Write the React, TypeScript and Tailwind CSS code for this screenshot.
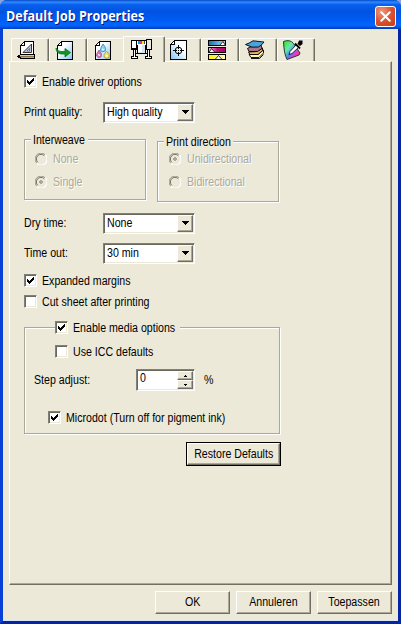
import React from 'react'
import clsx from 'clsx'
import { X } from 'lucide-react'

interface TextProps {
  children: React.ReactNode
  disabled?: boolean
  center?: boolean
  className?: string
}

/** Dialog text: narrow 8pt sans, etched when the control is disabled. */
function Text({ children, disabled, center, className }: TextProps): React.ReactElement {
  return (
    <span
      className={clsx(
        'inline-block whitespace-nowrap text-[12px] leading-[14px] scale-x-[0.885]',
        center ? 'origin-center' : 'origin-left',
        disabled ? 'text-[#aca899] [text-shadow:1px_1px_0_#fff]' : 'text-black',
        className,
      )}
    >
      {children}
    </span>
  )
}

const SUNKEN =
  'border border-t-[#808078] border-l-[#808078] border-b-white border-r-white shadow-[inset_1px_1px_0_#6a6960,inset_-1px_-1px_0_#ece9d8]'
const RAISED =
  'border border-t-white border-l-white border-b-[#716f64] border-r-[#716f64] shadow-[inset_-1px_-1px_0_#aca899]'
const ETCHED = 'border border-[#aca899] shadow-[1px_1px_0_#fff,inset_1px_1px_0_#fff]'

interface CheckProps {
  label: string
  checked?: boolean
  className?: string
}

function Check({ label, checked, className }: CheckProps): React.ReactElement {
  return (
    <div className={clsx('flex h-[13px] items-center gap-[5px]', className)}>
      <span className={clsx('h-[13px] w-[13px] shrink-0 bg-white', SUNKEN)}>
        {checked && (
          <svg width="11" height="11" viewBox="0 0 11 11" shapeRendering="crispEdges">
            <path d="M2 4h1v1h1v1h1v-1h1v-1h1v-1h1v-1h1v3h-1v1h-1v1h-1v1h-1v1h-1v-1h-1v-1h-1z" />
          </svg>
        )}
      </span>
      <Text>{label}</Text>
    </div>
  )
}

function Radio({ label, checked }: { label: string; checked?: boolean }): React.ReactElement {
  return (
    <div className="flex h-[13px] items-center gap-[6px]">
      <svg width="12" height="12" viewBox="0 0 12 12" fill="none" className="shrink-0">
        <path d="M1.8 10.2A5.4 5.4 0 0 1 10.2 1.8" stroke="#9b988a" />
        <path d="M2.7 9.3A4.5 4.5 0 0 1 9.3 2.7" stroke="#716f64" />
        <path d="M10.3 1.8A5.5 5.5 0 0 1 1.8 10.3" stroke="#fff" strokeWidth="1.2" />
        {checked && <path d="M5 4h2v1h1v2h-1v1h-2v-1h-1v-2h1z" fill="#aca899" />}
      </svg>
      <Text disabled>{label}</Text>
    </div>
  )
}

function Select({ label, value }: { label: string; value: string }): React.ReactElement {
  return (
    <div className="flex h-5 items-center">
      <Text className="w-[79px]">{label}</Text>
      <div className={clsx('flex h-[21px] w-[92px] items-center bg-white p-px pl-[3px]', SUNKEN)}>
        <Text className="flex-1">{value}</Text>
        <span className={clsx('flex h-[17px] w-[16px] items-center justify-center bg-[#ece9d8]', RAISED)}>
          <svg width="7" height="4" viewBox="0 0 7 4" shapeRendering="crispEdges">
            <path d="M0 0h7v1h-1v1h-1v1h-1v1h-1v-1h-1v-1h-1v-1h-1z" />
          </svg>
        </span>
      </div>
    </div>
  )
}

interface GroupProps {
  title: string
  titleWidth: string
  className?: string
  children: React.ReactNode
}

function Group({ title, titleWidth, className, children }: GroupProps): React.ReactElement {
  return (
    <div className={clsx('w-[122px]', ETCHED, className)}>
      <div className={clsx('-mt-[7px] ml-[6px] h-[14px] bg-[#ece9d8] pl-[2px]', titleWidth)}>
        <Text className="align-top">{title}</Text>
      </div>
      {children}
    </div>
  )
}

function Button({ label, focused }: { label: string; focused?: boolean }): React.ReactElement {
  return (
    <button
      type="button"
      className={clsx('flex', focused ? 'h-[24px] w-[95px] border border-black' : 'h-[23px] w-[75px]')}
    >
      <span className={clsx('flex h-full w-full items-center justify-center bg-[#ece9d8] pb-px', RAISED)}>
        <Text center>{label}</Text>
      </span>
    </button>
  )
}

/** White sheet with a folded corner, shared by the document tabs. */
function Sheet({ fill = '#fff' }: { fill?: string }): React.ReactElement {
  return (
    <>
      <path d="M7.5 1.5H18.500V19.500H3.500V5.500Z" fill={fill} stroke="#000" />
      <path d="M3.500 5.500H7.500V1.500" fill="#fff" stroke="#000" />
    </>
  )
}

function Icon({ children }: { children: React.ReactNode }): React.ReactElement {
  return (
    <svg width="22" height="21" viewBox="0 0 22 21" fill="none" shapeRendering="crispEdges" className="shrink-0">
      <defs>
        <linearGradient id="sky" x1="0" y1="0" x2="1" y2="1">
          <stop offset=".35" stopColor="#fff" />
          <stop offset="1" stopColor="#7fc0f5" />
        </linearGradient>
        <linearGradient id="skyLeft" x1="1" y1="0" x2="0" y2="1">
          <stop offset=".35" stopColor="#fff" />
          <stop offset="1" stopColor="#7fc0f5" />
        </linearGradient>
        <linearGradient id="cyan">
          <stop offset="0" stopColor="#1270ab" />
          <stop offset="1" stopColor="#a8dcf4" />
        </linearGradient>
        <linearGradient id="magenta">
          <stop offset="0" stopColor="#f3c3dc" />
          <stop offset=".5" stopColor="#c31579" />
          <stop offset="1" stopColor="#a50061" />
        </linearGradient>
        <linearGradient id="yellow">
          <stop offset="0" stopColor="#fff200" />
          <stop offset="1" stopColor="#fffbb0" />
        </linearGradient>
        <linearGradient id="gamut" x1="0" y1="0" x2="1" y2="1">
          <stop offset="0" stopColor="#38e020" />
          <stop offset=".35" stopColor="#65e8b0" />
          <stop offset=".55" stopColor="#4884f5" />
          <stop offset=".72" stopColor="#ec36cd" />
          <stop offset="1" stopColor="#ff3434" />
        </linearGradient>
      </defs>
      {children}
    </svg>
  )
}

const TAB_ICONS: React.ReactElement[] = [
  <Icon>
    <path d="M8.500 1.500H17.500V14.500H4.500V5.500Z" fill="#fff" stroke="#000" />
    <path d="M4.500 5.500H8.500V1.500" stroke="#000" />
    <path d="M7 12.500L15.500 4V12.500Z" fill="#bac2d5" stroke="#222" strokeWidth=".9" shapeRendering="auto" />
    <path d="M11 11L13.500 8.500V11Z" fill="#fff" stroke="#555" strokeWidth=".7" shapeRendering="auto" />
    <path d="M4 14h15v5H4v-1H2v-1H1v-1h1v-1h2z" fill="#000" />
    <path d="M4 15h14v1H4z" fill="#e0cb9c" />
    <path d="M4 16h14v1H4z" fill="#8c7347" />
    <path d="M5 17h13v1H5z" fill="#c4ab78" />
  </Icon>,
  <Icon>
    <Sheet fill="url(#sky)" />
    <path
      d="M2 8Q4 11.500 7 11.500H11V8.500L16.500 12.500L11 17V14H7Q2 13 2 8Z"
      fill="#159322"
      stroke="#08751a"
      strokeWidth=".8"
      shapeRendering="auto"
    />
  </Icon>,
  <Icon>
    <Sheet fill="url(#sky)" />
    <g shapeRendering="auto" strokeWidth=".8">
      <path d="M11 4Q15 9 13 11Q10 13 8.500 10.500Q8 8 11 4Z" fill="#8bd4ec" stroke="#3184ad" />
      <path d="M7 10Q11 14 9 17Q6 19 4.500 16Q4 14 7 10Z" fill="#dd74b0" stroke="#8b5b9d" />
      <path d="M14.500 11Q18.500 15 17 17.500Q14 19.500 12 17Q11 15 14.500 11Z" fill="#f1e456" stroke="#a79c50" />
      <path d="M10 9l2 1M6 14.500l2 1M14 15l1.500 1.500" stroke="#fff" strokeWidth="1.300" />
    </g>
  </Icon>,
  <Icon>
    <path d="M0 1h15V0h6v11h-6v-1H6v1H0z" fill="#000" />
    <path d="M1 2h4v7H1zM6 2h9v7H6z" fill="#fff" />
    <path d="M16 1h4v9h-4z" fill="#ece9e0" />
    <path d="M7 2h2v3H7z" fill="#00a2df" />
    <path d="M9 2h2v3H9z" fill="#e22aa0" />
    <path d="M11 2h2v3h-2z" fill="#ffe900" />
    <path d="M13 2h1v3h-1z" fill="#444" />
    <path d="M6 6h9v9H6z" fill="#000" />
    <path d="M7 6h7v8H7z" fill="#d2e5f4" />
    <path d="M7 6h4v7H7z" fill="#fff" />
    <path d="M2 11h1v7H2zM4 11h1v7H4zM16 11h1v7h-1zM18 11h1v7h-1zM4 14h13v1H4zM0 17h7v3H0zM14 17h7v3h-7z" fill="#000" />
    <path d="M3 11h1v7H3zM17 11h1v7h-1zM1 18h5v1H1zM15 18h5v1h-5z" fill="#fff" />
  </Icon>,
  <Icon>
    <path d="M6.500 .5H18.500V19.500H2.500V4.500Z" fill="url(#skyLeft)" stroke="#000" />
    <path d="M2.500 4.500H6.500V.5" fill="#fff" stroke="#000" />
    <circle cx="10.500" cy="10.500" r="3.300" stroke="#000" shapeRendering="auto" />
    <path d="M10 5h1v4h-1zM10 12h1v4h-1zM5 10h4v1H5zM12 10h4v1h-4zM10 10h1v1h-1z" fill="#000" />
  </Icon>,
  <Icon>
    <path d="M2.500 .5H19.500V5.500H2.500Z" fill="url(#cyan)" stroke="#000" />
    <path d="M2.500 7.500H19.500V12.500H2.500Z" fill="url(#magenta)" stroke="#000" />
    <path d="M2.500 14.500H19.500V19.500H2.500Z" fill="url(#yellow)" stroke="#000" />
    <g fill="#fff" stroke="#000" strokeWidth=".8" shapeRendering="auto">
      <path d="M13.500 5.500L17 1.500L19.500 5.500Z" />
      <path d="M3 12.500L5.500 8.500L9 12.500Z" />
      <path d="M9 19.500L12.500 15.500L16 19.500Z" />
    </g>
  </Icon>,
  <Icon>
    <g shapeRendering="auto" stroke="#000" strokeWidth=".9" strokeLinejoin="round">
      <path d="M5 14.500L7 17.500H15L19.500 13V10L14 14.500Z" fill="#fff3b0" />
      <path d="M4.500 12L6 14.500H14L18.500 10.500V8L13 11.500Z" fill="#f2b45e" />
      <path d="M3.500 8.500L5 11.500H13.500L18 8.500L17 5L6 7Z" fill="#a8788e" />
      <path d="M1.500 4.500Q5 3.500 9 .8L20 2Q18 5 14.500 7Q8 8.500 1.500 4.500Z" fill="#49a4dc" />
      <path d="M7 18.500H15.500L19.500 14.500" />
    </g>
  </Icon>,
  <Icon>
    <g shapeRendering="auto">
      <path d="M1.500 1.500Q8 -1 11.500 3.500L18 13Q17.500 14.500 17 15L5 19.500Q2 14 1.500 1.500Z" fill="url(#gamut)" stroke="#263b2a" />
      <path d="M7 14.500L8 11.500L14.500 4.500L17 7L10 13.500Z" fill="#fff" stroke="#000" strokeWidth=".8" />
      <path d="M13 3.500L18 8.500" stroke="#000" strokeWidth="1.800" />
      <path d="M15.500 4L17 .5H20.500V4L18 6Z" fill="#000" />
    </g>
  </Icon>,
]

const ACTIVE_TAB = 3

function Tabs(): React.ReactElement {
  return (
    <div className="-ml-[6px] flex h-[25px] items-end pl-[8px]">
      {TAB_ICONS.map((icon, i) => (
        <div
          key={i}
          className={clsx(
            'flex rounded-t-[2px] border border-b-0 border-t-white border-l-white border-r-[#716f64] bg-[#ece9d8] shadow-[inset_-1px_0_0_#aca899]',
            i === ACTIVE_TAB
              ? 'z-10 -mx-[2px] -mb-px h-[26px] w-[42px] pt-[2px] pl-[7px]'
              : 'h-[23px] w-[38px] pt-[1px] pl-[4px]',
          )}
        >
          {icon}
        </div>
      ))}
    </div>
  )
}

function Spinner(): React.ReactElement {
  return (
    <div className={clsx('flex h-[22px] w-[59px] bg-white p-px pl-[3px]', SUNKEN)}>
      <Text className="flex-1">0</Text>
      <div className="flex w-[16px] flex-col">
        <span className={clsx('flex h-[9px] items-center justify-center bg-[#ece9d8]', RAISED)}>
          <svg width="3" height="2" viewBox="0 0 3 2" shapeRendering="crispEdges">
            <path d="M1 0h1v1h1v1H0V1h1z" />
          </svg>
        </span>
        <span className={clsx('flex h-[9px] items-center justify-center bg-[#ece9d8]', RAISED)}>
          <svg width="3" height="2" viewBox="0 0 3 2" shapeRendering="crispEdges">
            <path d="M0 0h3v1H2v1H1V1H0z" />
          </svg>
        </span>
      </div>
    </div>
  )
}

function MediaOptions(): React.ReactElement {
  return (
    <div className={clsx('mt-[19px] h-[107px] w-[256px] pl-[9px]', ETCHED)}>
      <Check label="Enable media options" checked className="-mt-[7px] ml-[21px] w-[125px] bg-[#ece9d8]" />
      <Check label="Use ICC defaults" className="mt-[11px] ml-[21px]" />
      <div className="mt-[11px] flex items-center">
        <Text className="w-[102px]">Step adjust:</Text>
        <Spinner />
        <Text className="ml-[9px]">%</Text>
      </div>
      <Check label="Microdot (Turn off for pigment ink)" checked className="mt-[20px] ml-[14px]" />
    </div>
  )
}

export default function App(): React.ReactElement {
  return (
    <div className="h-[624px] w-[401px] overflow-hidden bg-[#8aa4dd] font-['Liberation_Sans',Arial,sans-serif]">
      <div className="flex h-full flex-col overflow-hidden rounded-t-[7px] bg-[#0a41dc]">
        <header className="flex h-[29px] shrink-0 items-center justify-between bg-[linear-gradient(180deg,#0845c6_0%,#2f8cff_7%,#0860ed_16%,#0053e1_40%,#005cf4_70%,#0066ff_87%,#004bd3_96%,#003bb8_100%)] pt-[3px] pr-[5px] pl-[6px]">
          <h1 className="origin-left scale-x-[0.895] text-[14px] leading-[18px] font-bold whitespace-nowrap text-white [text-shadow:1px_1px_0_#0a1883] font-['Open_Sans',sans-serif]">
            Default Job Properties
          </h1>
          <button
            type="button"
            aria-label="Close"
            className="flex h-[21px] w-[21px] items-center justify-center rounded-[3px] border border-white bg-[radial-gradient(circle_at_30%_25%,#ee9a80,#dc5230_50%,#c53c13)]"
          >
            <X size={17} strokeWidth={2.8} className="shrink-0 text-white" />
          </button>
        </header>
        <main className="flex flex-1 flex-col border-x-[3px] border-b-[3px] border-l-[#0841d5] border-r-[#0524a5] border-b-[#0524a5] bg-[#ece9d8] px-[6px] pt-[7px] shadow-[inset_0_-1px_0_#d9e6f2]">
          <Tabs />
          <section className="h-[524px] w-[383px] border border-t-white border-l-white border-b-[#716f64] border-r-[#716f64] pt-[13px] pl-[14px] shadow-[inset_-1px_-1px_0_#aca899]">
            <Check label="Enable driver options" checked />
            <div className="mt-[14px]">
              <Select label="Print quality:" value="High quality" />
            </div>
            <div className="mt-[17px] flex gap-[11px]">
              <Group title="Interweave" titleWidth="w-[57px]" className="h-[61px]">
                <div className="mt-[5px] flex flex-col gap-[10px] pl-[10px]">
                  <Radio label="None" />
                  <Radio label="Single" checked />
                </div>
              </Group>
              <Group title="Print direction" titleWidth="w-[69px]" className="mt-[2px] h-[61px]">
                <div className="mt-[3px] flex flex-col gap-[10px] pl-[11px]">
                  <Radio label="Unidirectional" checked />
                  <Radio label="Bidirectional" />
                </div>
              </Group>
            </div>
            <div className="mt-[11px] flex flex-col gap-[10px]">
              <Select label="Dry time:" value="None" />
              <Select label="Time out:" value="30 min" />
            </div>
            <Check label="Expanded margins" checked className="mt-[11px]" />
            <Check label="Cut sheet after printing" className="mt-[8px]" />
            <MediaOptions />
            <div className="mt-[8px] ml-[162px]">
              <Button label="Restore Defaults" focused />
            </div>
          </section>
          <footer className="mt-[6px] flex justify-end gap-[6px]">
            <Button label="OK" />
            <Button label="Annuleren" />
            <Button label="Toepassen" />
          </footer>
        </main>
      </div>
    </div>
  )
}
